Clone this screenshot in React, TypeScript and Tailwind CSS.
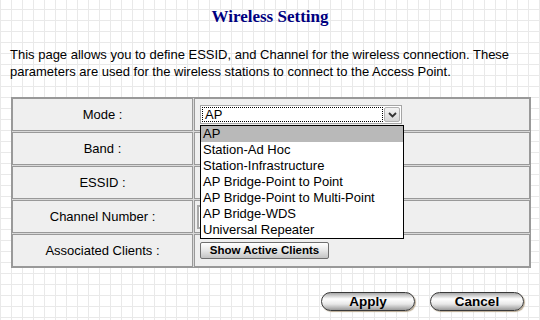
import React from "react";

const items = [
  "AP",
  "Station-Ad Hoc",
  "Station-Infrastructure",
  "AP Bridge-Point to Point",
  "AP Bridge-Point to Multi-Point",
  "AP Bridge-WDS",
  "Universal Repeater",
];

function Label({ children }: { children: React.ReactNode }) {
  return (
    <div className="h-[33px] border border-[#999999] bg-[#efefef] flex items-center justify-center text-[13px] text-black">
      {children}
    </div>
  );
}

function Cell({ children }: { children?: React.ReactNode }) {
  return (
    <div className="h-[33px] border border-[#999999] bg-[#efefef] flex items-center pl-[5px] relative">
      {children}
    </div>
  );
}

export default function App() {
  return (
    <div
      className="w-[540px] h-[320px] overflow-hidden bg-white bg-[linear-gradient(to_right,#e9e9e9_1px,transparent_1px),linear-gradient(to_bottom,#e9e9e9_1px,transparent_1px)] bg-[length:11px_11px] bg-[position:0px_9px] text-black"
      style={{ fontFamily: '"Liberation Sans", Arial, sans-serif' }}
    >
      <h1
        className="pt-[7px] text-center text-[17px] leading-[20px] font-bold text-[#000080]"
        style={{ fontFamily: '"Liberation Serif", "Times New Roman", serif' }}
      >
        Wireless Setting
      </h1>
      <p className="mt-[19px] px-[10px] text-[13px] leading-[17px]">
        This page allows you to define ESSID, and Channel for the wireless connection. These
        parameters are used for the wireless stations to connect to the Access Point.
      </p>

      <div className="mt-[17px] mx-[11px] w-[520px] border border-[#999999] bg-[#d9d9d9] grid grid-cols-[181px_1fr] gap-px">
        <Label>Mode :</Label>
        <Cell>
          <div className="relative">
            <div className="w-[202px] h-[19px] border border-[#a5a5a5] bg-white flex items-center p-px">
              <div className="flex-1 h-full border border-dotted border-black flex items-center pl-[2px] text-[13px] leading-none">
                AP
              </div>
              <div className="ml-px w-[16px] h-full border border-[#b0b0b0] rounded-[2px] bg-[linear-gradient(to_bottom,#f4f4f4,#d6d6d6)] flex items-center justify-center">
                <svg width="9" height="6" viewBox="0 0 9 6">
                  <path d="M1 1 L4.5 4.5 L8 1" stroke="#333" strokeWidth="1.8" fill="none" />
                </svg>
              </div>
            </div>
            <div className="absolute left-0 top-[20px] w-[204px] border border-black bg-white z-10">
              {items.map((it, i) => (
                <div
                  key={it}
                  className={`h-[16px] leading-[16px] pl-[2px] text-[13px] whitespace-nowrap ${
                    i === 0 ? "bg-[#b9b9b9]" : ""
                  }`}
                >
                  {it}
                </div>
              ))}
            </div>
          </div>
        </Cell>
        <Label>Band :</Label>
        <Cell />
        <Label>ESSID :</Label>
        <Cell />
        <Label>Channel Number :</Label>
        <div className="h-[33px] border border-[#999999] bg-[#efefef] flex items-center pl-[2px]">
          <div className="w-[60px] h-[24px] border-2 border-[#a8a8a8] bg-white" />
        </div>
        <Label>Associated Clients :</Label>
        <Cell>
          <button className="w-[129px] h-[17px] border border-[#6f6f6f] rounded-[2px] bg-[linear-gradient(to_bottom,#ffffff,#e6e6e6_50%,#c4c4c4)] text-[11.5px] font-bold leading-none flex items-center justify-center">
            Show Active Clients
          </button>
        </Cell>
      </div>

      <div className="mt-[24px] flex justify-end gap-[15px] pr-[16px]">
        <button className="w-[94px] h-[19px] rounded-full border border-[#3a3a3a] bg-[linear-gradient(to_bottom,#a8a8a8,#ffffff_35%,#e8e8e8_65%,#9a9a9a)] shadow-[1px_1px_1px_#b8a88f] text-[13.5px] font-bold leading-none flex items-center justify-center">
          Apply
        </button>
        <button className="w-[94px] h-[19px] rounded-full border border-[#3a3a3a] bg-[linear-gradient(to_bottom,#a8a8a8,#ffffff_35%,#e8e8e8_65%,#9a9a9a)] shadow-[1px_1px_1px_#b8a88f] text-[13.5px] font-bold leading-none flex items-center justify-center">
          Cancel
        </button>
      </div>
    </div>
  );
}
